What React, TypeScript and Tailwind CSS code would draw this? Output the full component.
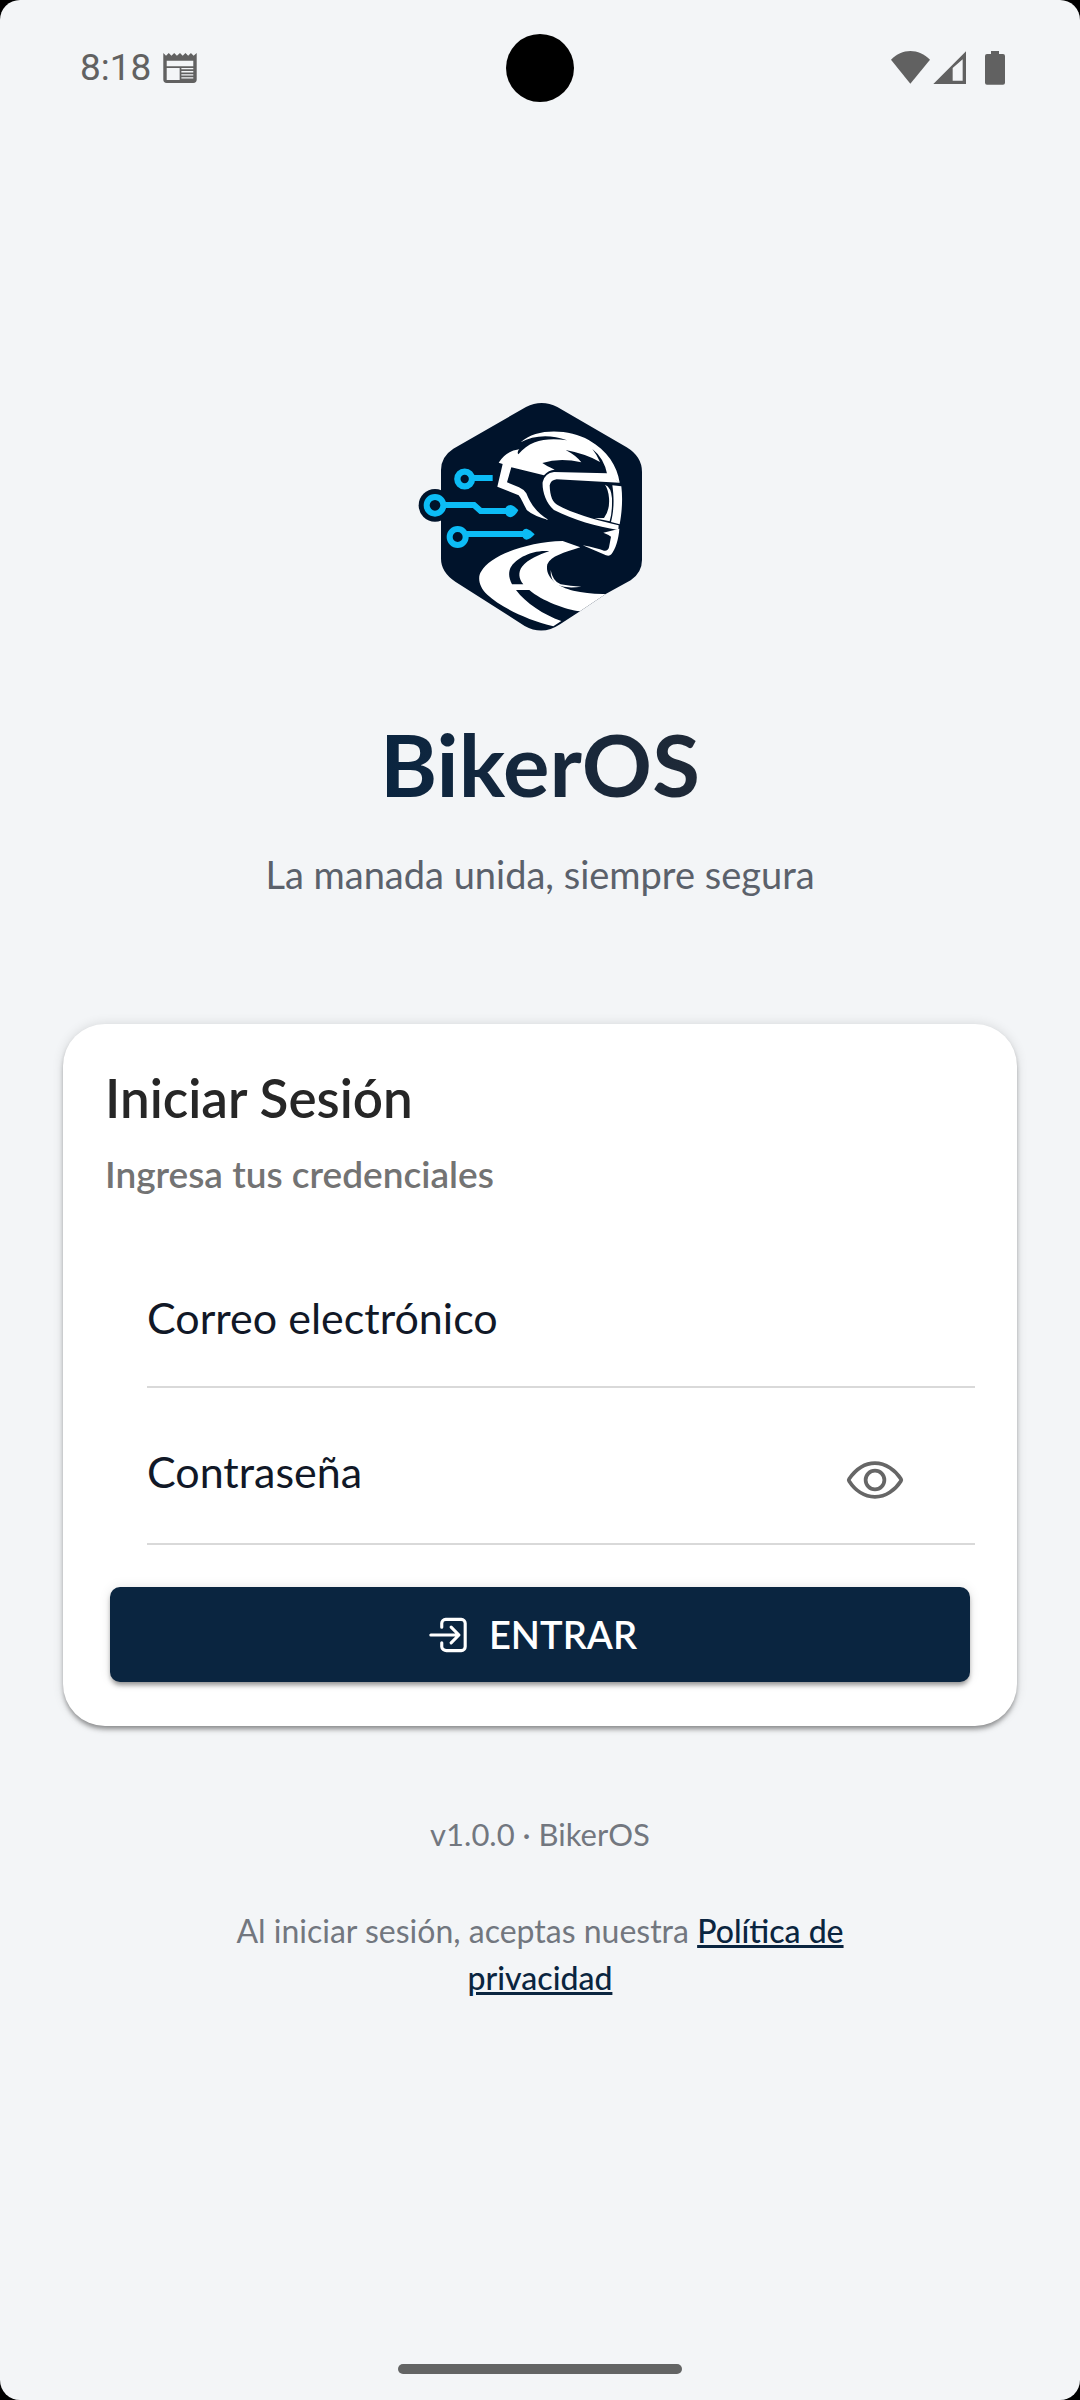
import { useState } from 'react'
import { IoEyeOutline, IoLogInOutline } from 'react-icons/io5'

const StatusBar = () => {
  return (
    <div className="relative flex items-center justify-between h-34 pl-20 pr-18 text-[#616161]">
      <div className="flex items-center gap-3">
        <span className="font-[Roboto,sans-serif] text-[37px]">8:18</span>
        <svg width="34" height="30" viewBox="0 0 98 88" fill="currentColor">
          <path
            fillRule="evenodd"
            d="M0 0L8 8L16 0L24 8L32 0L40 8L49 0L57 8L65 0L73 8L81 0L89 8L98 0V78Q98 88 88 88H10Q0 88 0 78ZM10 23V39H88V23ZM10 44V79H48V44ZM53 44V48H88V44ZM53 53V57H88V53ZM53 62V66H88V62ZM53 71V75H88V71Z"
          />
        </svg>
      </div>
      <div className="absolute top-1/2 left-1/2 size-17 -translate-1/2 rounded-full bg-black" />
      <svg width="117" height="36" viewBox="0 0 351 108" fill="currentColor">
        <path d="M0 29C32 -6 84 -6 117 29L58 101Z" />
        <path fillRule="evenodd" d="M127 102L225 4V102ZM185 54V92H215V28Z" />
        <path d="M300 3H324V12H336Q342 12 342 18V98Q342 104 336 104H288Q282 104 282 98V18Q282 12 288 12H300Z" />
      </svg>
    </div>
  )
}

const Logo = () => {
  return (
    <svg width="260" height="250" viewBox="30 0 780 750" role="img" aria-label="BikerOS">
      <path
        fill="#00132b"
        d="M378 51Q425 27 472 51L680 172Q726 200 726 246V510Q726 548 692 571L617 612L540 664L480 703Q428 738 374 708L166 575Q123 546 123 506V240Q123 200 160 176Z"
      />
      <circle cx="105" cy="346" r="49" fill="#00132b" />

      {/* circuit lines */}
      <g fill="none" stroke="#0cbcf6" strokeWidth="18">
        <circle cx="194" cy="267" r="22" strokeWidth="19" />
        <circle cx="105" cy="346" r="25" />
        <circle cx="173" cy="441" r="24" />
        <path d="M218 264H278" />
        <path d="M132 345H222L242 363H330" />
        <path d="M200 432H380" />
      </g>
      <path fill="#0cbcf6" d="M314 363Q316 345 332 345Q343 346 355 361Q345 380 332 382Q316 380 314 363Z" />
      <path fill="#0cbcf6" d="M364 432Q368 416 380 416Q392 419 404 433Q392 447 380 449Q368 448 364 432Z" />

      {/* helmet crown */}
      <path
        fill="#fff"
        d="M362 157C410 112 510 118 566 150C622 182 652 228 659 278L622 254Q612 204 577 177Q592 196 600 216Q560 192 497 180Q528 196 544 217Q480 202 427 219Q440 228 464 239Q446 240 432 256L334 232L321 277L357 292Q371 298 379 310C390 336 402 362 446 390Q402 379 381 361C370 342 364 326 356 316L292 290L308 222L296 218Q318 182 358 178Q350 186 355 193C392 150 440 143 501 151C450 132 400 136 362 157Z"
      />
      {/* visor frame, side strip and chin */}
      <path
        fill="#fff"
        d="M622 250L659 278L470 268Q452 270 449 286C450 320 458 338 474 346C530 376 600 392 656 406L655 420C590 410 520 390 462 360C436 338 426 300 428 276Q434 250 462 246Z"
      />
      <path fill="#fff" d="M637 286L664 289C669 330 665 370 659 403L633 396C643 356 642 320 637 286Z" />
      <path fill="#fff" d="M615 284Q634 292 636 325Q637 370 629 394L584 385L612 384Q630 360 627 324Q625 298 615 284Z" />
      <path fill="#fff" d="M610 428L658 416C656 448 646 478 634 493Q629 499 618 496L548 466Q590 474 612 482Q624 484 627 472L633 440Q626 434 610 428Z" />

      {/* road */}
      <path
        fill="#fff"
        d="M488 453L541 472C490 488 454 498 442 523C434 560 470 590 520 602C550 608 580 613 617 612L540 664C500 660 424 632 388 600H348C378 640 430 674 484 693L460 709C380 690 300 650 262 614C236 590 232 560 244 544C270 496 380 456 488 453Z"
      />
      <path
        fill="#00132b"
        d="M448 484C400 478 340 506 329 540C324 558 332 574 336 583H370C356 566 354 546 366 530C384 508 416 494 448 484Z"
      />
      <path fill="#fff" d="M452 540Q458 574 482 583Q510 588 544 590Q500 596 474 586Q450 572 452 540Z" />
    </svg>
  )
}

const App = () => {
  const [showPassword, setShowPassword] = useState(false)

  return (
    <div className="bg-black">
      <div className="flex flex-col min-h-screen rounded-[20px] bg-[#f3f5f7] font-[Lato,sans-serif]">
        <StatusBar />
        <main className="flex-1 flex flex-col items-center px-[63px] pt-[254px]">
          <Logo />
          <h1 className="mt-[70px] text-[87px] leading-[108px] font-bold bg-linear-to-r from-[#0a2540] to-[#1f2937] bg-clip-text text-transparent">
            BikerOS
          </h1>
          <p className="mt-7 text-[38px] leading-[56px] text-[#5b616b]">La manada unida, siempre segura</p>

          <form
            className="w-full mt-[122px] p-[42px] pb-11 rounded-[42px] bg-white shadow-[0_4px_5px_-1px_rgba(0,0,0,0.4),0_0_12px_rgba(0,0,0,0.12)]"
            onSubmit={(e) => e.preventDefault()}
          >
            <h2 className="text-[53px] leading-[64px] font-semibold text-[#262626]">Iniciar Sesión</h2>
            <p className="mt-5 text-[37px] leading-[48px] font-semibold text-[#737373]">Ingresa tus credenciales</p>

            <div className="pl-[42px] mt-[92px]">
              <div className="flex flex-col border-b-2 border-[#d9d9d9]">
                <label htmlFor="email" className="text-[43px] leading-[56px] text-[#111827]">
                  Correo electrónico
                </label>
                <input id="email" type="email" className="h-10 w-full outline-none text-4xl" />
              </div>
              <div className="flex items-center mt-14 border-b-2 border-[#d9d9d9]">
                <div className="flex-1 flex flex-col">
                  <label htmlFor="password" className="text-[43px] leading-[56px] text-[#111827]">
                    Contraseña
                  </label>
                  <input
                    id="password"
                    type={showPassword ? 'text' : 'password'}
                    className="h-[43px] w-full outline-none text-4xl"
                  />
                </div>
                <button
                  type="button"
                  aria-label="Mostrar contraseña"
                  className="mr-[70px] mb-7 text-[#666]"
                  onClick={() => setShowPassword(!showPassword)}
                >
                  <IoEyeOutline size={60} />
                </button>
              </div>
            </div>

            <div className="px-[5px] mt-[42px]">
              <button
                type="submit"
                className="flex items-center justify-center gap-4 w-full h-[95px] pr-5 rounded-[10px] bg-[#0a2540] text-white text-[38px] font-semibold shadow-[0_4px_5px_-1px_rgba(0,0,0,0.4),0_0_12px_rgba(0,0,0,0.1)]"
              >
                <IoLogInOutline size={50} />
                ENTRAR
              </button>
            </div>
          </form>

          <p className="mt-[85px] text-[31px] leading-[47px] text-[#72777f]">v1.0.0 · BikerOS</p>
          <p className="mt-[49px] max-w-[640px] text-center text-[32px] leading-[47px] text-[#72777f]">
            Al iniciar sesión, aceptas nuestra{' '}
            <a href="#privacidad" className="font-medium text-[#0a2540] underline decoration-3">
              Política de privacidad
            </a>
          </p>
        </main>
        <div className="w-71 h-[10px] mx-auto mb-[26px] rounded-full bg-[#636464]" />
      </div>
    </div>
  )
}

export default App
